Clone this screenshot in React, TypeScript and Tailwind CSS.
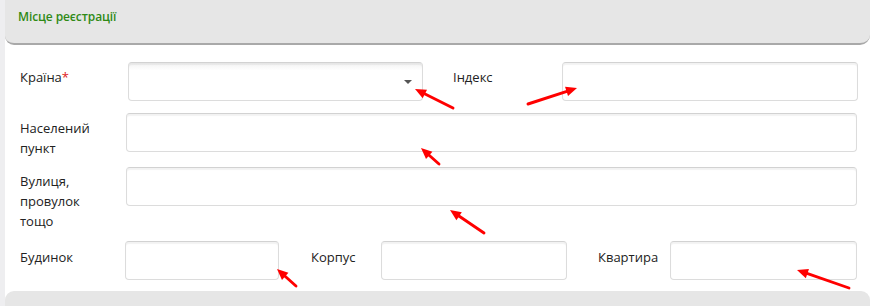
import React from "react";

const arrows: [number, number, number, number][] = [
  [453, 108, 415, 89],
  [528, 104, 577, 88],
  [439, 164, 421, 148],
  [484, 233, 450, 210],
  [296, 286, 277, 269],
  [849, 288, 797, 270],
];

function Arrow({ x1, y1, x2, y2 }: { x1: number; y1: number; x2: number; y2: number }) {
  const dx = x2 - x1;
  const dy = y2 - y1;
  const len = Math.sqrt(dx * dx + dy * dy);
  const ux = dx / len;
  const uy = dy / len;
  const hl = 11;
  const hw = 4.8;
  const bx = x2 - ux * hl;
  const by = y2 - uy * hl;
  const px = -uy;
  const py = ux;
  const pts = `${x2},${y2} ${bx + px * hw},${by + py * hw} ${bx - px * hw},${by - py * hw}`;
  return (
    <g>
      <line x1={x1} y1={y1} x2={bx + ux * 2} y2={by + uy * 2} stroke="#ff0000" strokeWidth={2.9} strokeLinecap="round" />
      <polygon points={pts} fill="#ff0000" />
    </g>
  );
}

const inputCls =
  "h-[39px] rounded-[4px] border border-[#dcdcdc] border-t-[#d2d2d2] bg-white shadow-[inset_0_2px_1px_rgba(0,0,0,0.05)]";

export default function App() {
  return (
    <div
      className="relative w-[871px] h-[306px] overflow-hidden bg-white flex text-[13px] text-[#222]"
      style={{ fontFamily: '"Open Sans", "Noto Sans", sans-serif' }}
    >
      <div className="w-[5px] bg-[#eeeef0] shrink-0" />
      <div className="flex-1 flex flex-col">
        <div className="h-[45px] mr-[1px] bg-[#e6e6e6] rounded-bl-[9px] rounded-br-[10px] border-b-[2px] border-[#a9a9a9] pl-[13px] pt-[7px]">
          <span className="text-[12px] font-semibold text-[#2f8a15] tracking-[-0.1px]">Місце реєстрації</span>
        </div>

        <div className="flex items-center mt-[17px] h-[39px]">
          <div className="w-[123px] pl-[15px] -mt-[7px]">
            Країна<span className="text-[#e02020]">*</span>
          </div>
          <div className={`${inputCls} w-[295px] relative bg-gradient-to-b from-[#f2f2f2] to-white from-[0%] to-[20%]`}>
            <div className="absolute right-[10px] top-[17px] w-0 h-0 border-l-[4px] border-r-[4px] border-t-[4px] border-l-transparent border-r-transparent border-t-[#555]" />
          </div>
          <div className="w-[139px] pl-[30px] -mt-[7px]">Індекс</div>
          <div className={`${inputCls} w-[296px]`} />
        </div>

        <div className="flex items-center mt-[12px] h-[39px]">
          <div className="w-[121px] pl-[15px] leading-[20px] mt-[11px]">
            Населений
            <br />
            пункт
          </div>
          <div className={`${inputCls} w-[731px]`} />
        </div>

        <div className="flex items-start mt-[15px] h-[60px]">
          <div className="w-[121px] pl-[15px] leading-[20px] pt-[4px]">
            Вулиця,
            <br />
            провулок
            <br />
            тощо
          </div>
          <div className={`${inputCls} w-[731px]`} />
        </div>

        <div className="flex items-center mt-[14px] h-[39px]">
          <div className="w-[120px] pl-[15px] -mt-[6px]">Будинок</div>
          <div className={`${inputCls} w-[154px]`} />
          <div className="w-[102px] pl-[32px] -mt-[6px]">Корпус</div>
          <div className={`${inputCls} w-[186px]`} />
          <div className="w-[103px] pl-[31px] -mt-[6px]">Квартира</div>
          <div className={`${inputCls} w-[187px]`} />
        </div>

        <div className="mt-[11px] flex-1 mr-[1px] bg-[#e6e6e6] rounded-t-[9px]" />
      </div>

      <svg className="absolute inset-0 pointer-events-none" width={871} height={306}>
        {arrows.map(([a, b, c, d], i) => (
          <Arrow key={i} x1={a} y1={b} x2={c} y2={d} />
        ))}
      </svg>
    </div>
  );
}
